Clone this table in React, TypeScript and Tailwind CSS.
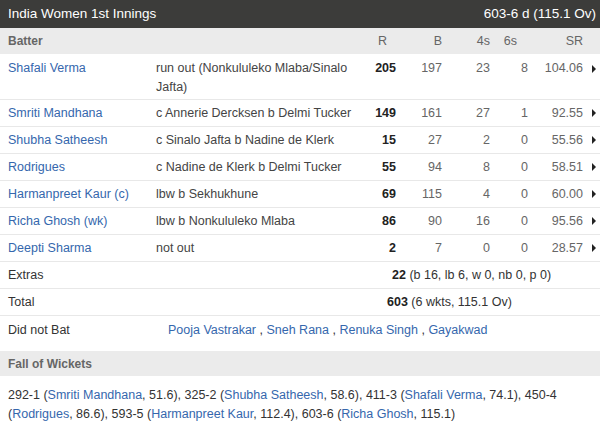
import React from "react";

type Batter = {
  name: string;
  out: string[];
  r: string;
  b: string;
  fours: string;
  sixes: string;
  sr: string;
};

const BATTERS: Batter[] = [
  { name: "Shafali Verma", out: ["run out (Nonkululeko Mlaba/Sinalo", "Jafta)"], r: "205", b: "197", fours: "23", sixes: "8", sr: "104.06" },
  { name: "Smriti Mandhana", out: ["c Annerie Dercksen b Delmi Tucker"], r: "149", b: "161", fours: "27", sixes: "1", sr: "92.55" },
  { name: "Shubha Satheesh", out: ["c Sinalo Jafta b Nadine de Klerk"], r: "15", b: "27", fours: "2", sixes: "0", sr: "55.56" },
  { name: "Rodrigues", out: ["c Nadine de Klerk b Delmi Tucker"], r: "55", b: "94", fours: "8", sixes: "0", sr: "58.51" },
  { name: "Harmanpreet Kaur (c)", out: ["lbw b Sekhukhune"], r: "69", b: "115", fours: "4", sixes: "0", sr: "60.00" },
  { name: "Richa Ghosh (wk)", out: ["lbw b Nonkululeko Mlaba"], r: "86", b: "90", fours: "16", sixes: "0", sr: "95.56" },
  { name: "Deepti Sharma", out: ["not out"], r: "2", b: "7", fours: "0", sixes: "0", sr: "28.57" },
];

const COLS = "grid grid-cols-[148px_204px_36px_46px_48px_38px_55px_1fr]";

const Arrow = () => (
  <svg width="4" height="8" viewBox="0 0 4 8" className="ml-[9px]">
    <path d="M0 0 L4 4 L0 8 Z" fill="#222" />
  </svg>
);

const Link = ({ children }: { children: React.ReactNode }) => (
  <span className="text-[#3567ad]">{children}</span>
);

export default function App() {
  return (
    <div className="w-[600px] h-[427px] bg-white font-['Liberation_Sans',Arial,sans-serif] text-[12.5px] text-[#333] overflow-hidden">
      {/* innings bar */}
      <div className="h-[28px] bg-[#3c3c3a] flex items-center justify-between pl-2 pr-[4px] text-[13.5px] text-white">
        <span>India Women 1st Innings</span>
        <span>603-6 d (115.1 Ov)</span>
      </div>

      {/* column heads */}
      <div className={`${COLS} h-[26px] items-center bg-[#ebebeb] pl-2 text-[#666]`}>
        <span className="font-bold text-[12px]">Batter</span>
        <span />
        <span className="text-right pr-[9px]">R</span>
        <span className="text-right">B</span>
        <span className="text-right">4s</span>
        <span className="text-right pr-[11px]">6s</span>
        <span className="text-right">SR</span>
        <span />
      </div>

      {BATTERS.map((p, i) => (
        <div
          key={p.name}
          className={`${COLS} ${i === 0 ? "h-[46px] items-start pt-[5px]" : "h-[27px] items-center"} pl-2 border-b border-[#e8e8e8] leading-[19px]`}
        >
          <Link>{p.name}</Link>
          <div className="text-[#444]">
            {p.out.map((l) => (
              <div key={l}>{l}</div>
            ))}
          </div>
          <span className="text-right font-bold text-[#222]">{p.r}</span>
          <span className="text-right text-[#666]">{p.b}</span>
          <span className="text-right text-[#666]">{p.fours}</span>
          <span className="text-right text-[#666]">{p.sixes}</span>
          <span className="text-right text-[#666]">{p.sr}</span>
          <span className="flex items-center h-[19px]">
            <Arrow />
          </span>
        </div>
      ))}

      <div className="flex h-[27px] items-center pl-2 border-b border-[#e8e8e8]">
        <span className="w-[148px]">Extras</span>
        <span className="pl-[236px]">
          <b className="text-[#222]">22</b> (b 16, lb 6, w 0, nb 0, p 0)
        </span>
      </div>
      <div className="flex h-[27px] items-center pl-2 border-b border-[#e8e8e8]">
        <span className="w-[148px]">Total</span>
        <span className="pl-[231px]">
          <b className="text-[#222]">603</b> (6 wkts, 115.1 Ov)
        </span>
      </div>
      <div className="flex h-[35px] items-start pt-[5px] pl-2">
        <span className="w-[160px]">Did not Bat</span>
        <span>
          <Link>Pooja Vastrakar</Link> , <Link>Sneh Rana</Link> , <Link>Renuka Singh</Link> , <Link>Gayakwad</Link>
        </span>
      </div>

      <div className="h-[25px] flex items-center bg-[#ebebeb] pl-2 text-[#666] font-bold text-[12px]">
        Fall of Wickets
      </div>
      <div className="pl-2 pt-[10px] leading-[19px]">
        292-1 (<Link>Smriti Mandhana</Link>, 51.6), 325-2 (<Link>Shubha Satheesh</Link>, 58.6), 411-3 (<Link>Shafali Verma</Link>, 74.1), 450-4
        <br />
        (<Link>Rodrigues</Link>, 86.6), 593-5 (<Link>Harmanpreet Kaur</Link>, 112.4), 603-6 (<Link>Richa Ghosh</Link>, 115.1)
      </div>
    </div>
  );
}
